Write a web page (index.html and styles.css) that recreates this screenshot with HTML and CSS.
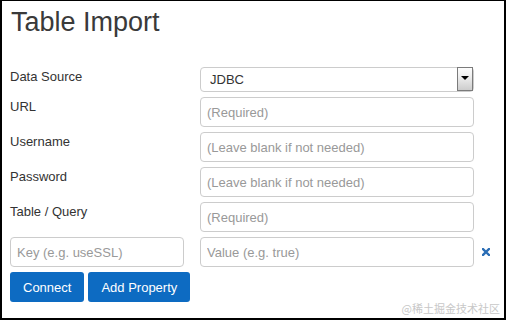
FILE: index.html
```html
<!DOCTYPE html>
<html>
<head>
<meta charset="utf-8">
<link rel="stylesheet" href="styles.css">
</head>
<body>
<div class="panel">
  <h1 class="title">Table Import</h1>
  <div class="form">
    <label class="lbl">Data Source</label>
    <div class="select-wrap">
      <select class="select"><option>JDBC</option></select>
      <span class="arrow"><span class="tri"></span></span>
    </div>
    <span></span>

    <label class="lbl">URL</label>
    <input class="input" placeholder="(Required)">
    <span></span>

    <label class="lbl">Username</label>
    <input class="input" placeholder="(Leave blank if not needed)">
    <span></span>

    <label class="lbl">Password</label>
    <input class="input" placeholder="(Leave blank if not needed)">
    <span></span>

    <label class="lbl">Table / Query</label>
    <input class="input" placeholder="(Required)">
    <span></span>

    <input class="input key" placeholder="Key (e.g. useSSL)">
    <input class="input" placeholder="Value (e.g. true)">
    <span class="remove"><svg width="8" height="8" viewBox="0 0 8 8"><path d="M1 1L7 7M7 1L1 7" stroke="#2a6db5" stroke-width="2.4" stroke-linecap="square"/></svg></span>

    <div class="buttons">
      <button class="btn">Connect</button>
      <button class="btn">Add Property</button>
    </div>
  </div>
  <span class="watermark">@稀土掘金技术社区</span>
</div>
</body>
</html>
```
FILE: styles.css
```css
html, body {
  margin: 0;
  padding: 0;
  background: #fff;
}
.panel {
  position: relative;
  width: 506px;
  height: 320px;
  box-sizing: border-box;
  border-style: solid;
  border-color: #000;
  border-width: 1px 2px 2px 2px;
  padding: 5px 0 0 8px;
  font-family: "Liberation Sans", Arial, sans-serif;
  color: #333;
}
.title {
  margin: 0 0 29px 1px;
  font-size: 27px;
  line-height: 32px;
  font-weight: normal;
  color: #3a3a3a;
}
.form {
  display: grid;
  grid-template-columns: 190px 274px 24px;
  row-gap: 5px;
  align-items: start;
}
.lbl {
  font-size: 13px;
  line-height: 20px;
  color: #333;
}
.select-wrap {
  position: relative;
  height: 25px;
}
.select {
  appearance: none;
  -webkit-appearance: none;
  width: 274px;
  height: 25px;
  box-sizing: border-box;
  border: 1px solid #ccc;
  border-radius: 4px;
  background: #fff;
  padding: 0 0 0 9px;
  font-family: "Liberation Sans", Arial, sans-serif;
  font-size: 13px;
  color: #333;
  margin: 0;
}
.arrow {
  position: absolute;
  top: 0;
  right: 1px;
  width: 16px;
  height: 24px;
  box-sizing: border-box;
  border: 1px solid #7b7b7b;
  background: linear-gradient(#fdfdfd 0%, #f0f0f0 35%, #cdcdcd 100%);
  display: flex;
  justify-content: center;
}
.tri {
  margin-top: 8px;
  width: 0;
  height: 0;
  border-left: 4px solid transparent;
  border-right: 4px solid transparent;
  border-top: 4px solid #000;
}
.input {
  width: 274px;
  height: 30px;
  box-sizing: border-box;
  border: 1px solid #ccc;
  border-radius: 4px;
  padding: 0 6px;
  margin: 0;
  font-family: "Liberation Sans", Arial, sans-serif;
  font-size: 13px;
  color: #333;
  background: #fff;
}
.input::placeholder {
  color: #999;
}
.key {
  width: 174px;
}
.remove {
  height: 30px;
  display: flex;
  align-items: center;
  justify-content: center;
}
.remove svg {
  display: block;
}
.buttons {
  grid-column: 1 / 4;
  display: flex;
  gap: 4px;
}
.btn {
  height: 30px;
  padding: 0 13px;
  border: none;
  border-radius: 3px;
  background: #0d6bc2;
  color: #fff;
  font-family: "Liberation Sans", Arial, sans-serif;
  font-size: 13px;
  margin: 0;
}
.watermark {
  position: absolute;
  right: 4px;
  bottom: 2px;
  font-family: "Noto Sans CJK SC", sans-serif;
  font-size: 11px;
  line-height: 16px;
  color: #c8c8c8;
}
```
